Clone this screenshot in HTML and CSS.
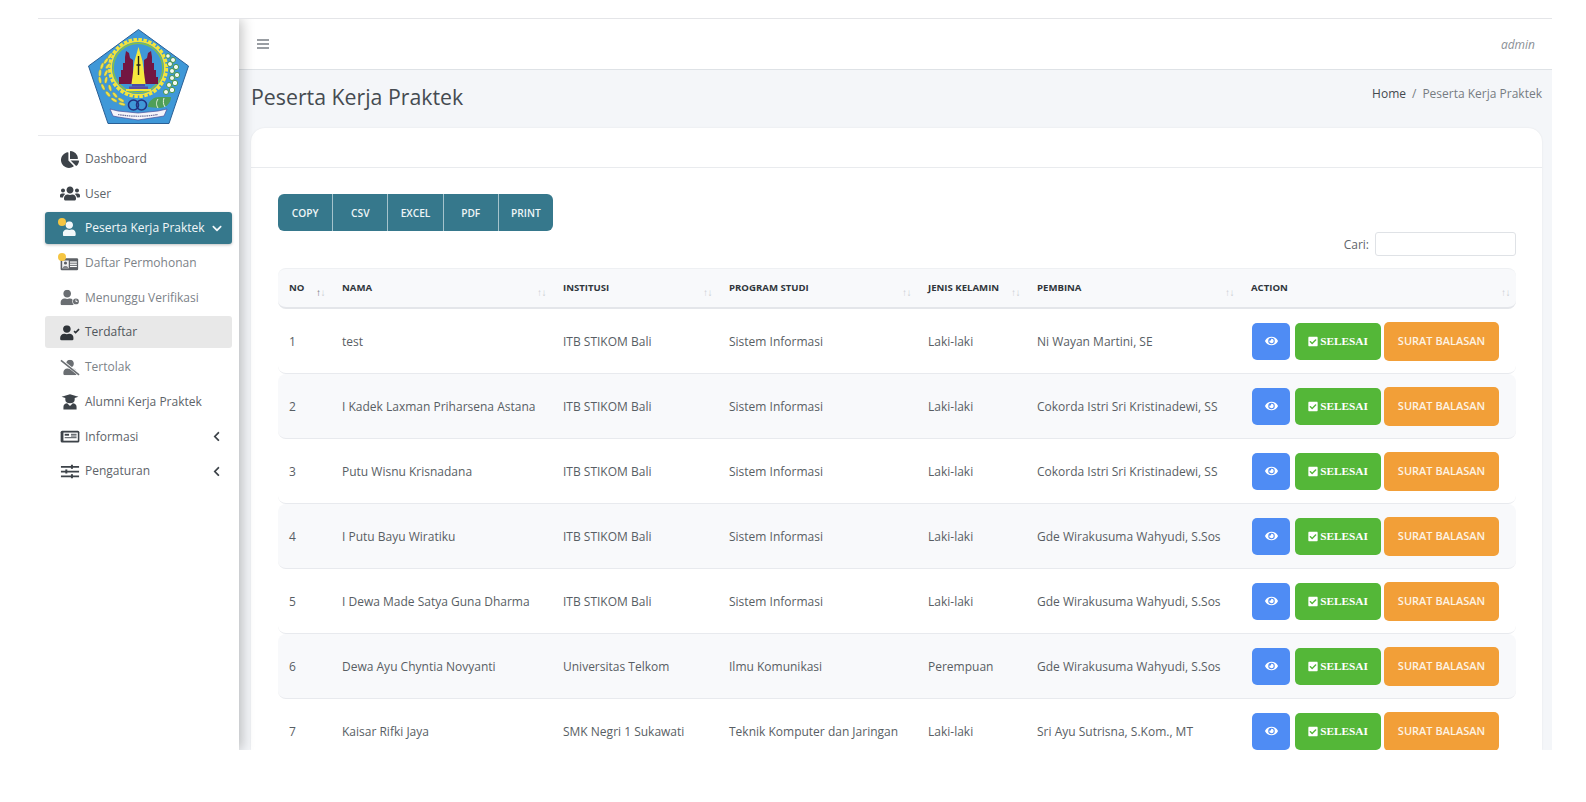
FILE: index.html
```html
<!DOCTYPE html>
<html lang="id">
<head>
<meta charset="utf-8">
<title>Peserta Kerja Praktek</title>
<link rel="stylesheet" href="styles.css">
</head>
<body>
<svg class="defs" width="0" height="0" aria-hidden="true">
  <symbol id="i-user" viewBox="0 0 448 512"><path d="M224 256c70.7 0 128-57.3 128-128S294.7 0 224 0 96 57.3 96 128s57.3 128 128 128zm89.6 32h-16.7c-22.2 10.2-46.9 16-72.9 16s-50.6-5.8-72.9-16h-16.7C60.2 288 0 348.2 0 422.4V464c0 26.5 21.5 48 48 48h352c26.5 0 48-21.5 48-48v-41.6c0-74.2-60.2-134.4-134.4-134.4z"/></symbol>
  <symbol id="i-eye" viewBox="0 0 576 512"><path d="M572.52 241.4C518.29 135.59 410.93 64 288 64S57.68 135.64 3.48 241.41a32.35 32.35 0 0 0 0 29.19C57.71 376.41 165.07 448 288 448s230.32-71.64 284.52-177.41a32.35 32.35 0 0 0 0-29.19zM288 400a144 144 0 1 1 144-144 143.93 143.93 0 0 1-144 144zm0-240a95.31 95.31 0 0 0-25.31 3.79 47.85 47.85 0 0 1-66.9 66.9A95.78 95.78 0 1 0 288 160z"/></symbol>
  <symbol id="i-check" viewBox="0 0 448 512"><path d="M400 480H48c-26.51 0-48-21.49-48-48V80c0-26.51 21.49-48 48-48h352c26.51 0 48 21.49 48 48v352c0 26.51-21.49 48-48 48zm-204.686-98.059l184-184c6.248-6.248 6.248-16.379 0-22.627l-22.627-22.627c-6.248-6.248-16.379-6.249-22.628 0L184 302.745l-69.059-69.059c-6.248-6.248-16.379-6.248-22.628 0L69.686 256.313c-6.248 6.248-6.248 16.379 0 22.627l104 104c6.249 6.25 16.379 6.25 22.628.001z"/></symbol>
  <symbol id="i-left" viewBox="0 0 320 512"><path d="M34.52 239.03L228.87 44.69c9.37-9.37 24.57-9.37 33.94 0l22.67 22.67c9.36 9.36 9.37 24.52.04 33.9L131.49 256l154.02 154.75c9.34 9.38 9.32 24.54-.04 33.9l-22.67 22.67c-9.37 9.37-24.57 9.37-33.94 0L34.52 272.97c-9.37-9.37-9.37-24.57 0-33.94z"/></symbol>
  <symbol id="i-down" viewBox="0 0 448 512"><path d="M207.029 381.476L12.686 187.132c-9.373-9.373-9.373-24.569 0-33.941l22.667-22.667c9.357-9.357 24.522-9.375 33.901-.04L224 284.505l154.745-154.021c9.379-9.335 24.544-9.317 33.901.04l22.667 22.667c9.373 9.373 9.373 24.569 0 33.941L240.971 381.476c-9.373 9.372-24.569 9.372-33.942 0z"/></symbol>
</svg>
<div class="frame">
  <aside class="sidebar">
    <div class="brand">
      <svg class="logo" viewBox="0 0 101 95" role="img" aria-label="Logo">
        <polygon points="50.5,0.5 100.5,37 81,94.5 20,94.5 0.5,37" fill="#3f98d8" stroke="#2a5f95" stroke-width="1"/>
        <circle cx="50" cy="39" r="28.6" fill="none" stroke="#f4e53c" stroke-width="3" stroke-dasharray="3.5 1.5"/>
        <circle cx="50" cy="39" r="26.8" fill="#3f98d8" stroke="#f4e53c" stroke-width="1.6"/>
        <circle cx="50" cy="39" r="24.8" fill="#3f98d8" stroke="#86c046" stroke-width="1.4"/>
        <polygon points="38,22 41,24 42,29 45,31 45,55 31,55 31,48 33,48 33,41 35,41 35,34 37,34 37,28" fill="#731642"/>
        <polygon points="63,22 60,24 59,29 56,31 56,55 70,55 70,48 68,48 68,41 66,41 66,34 64,34 64,28" fill="#731642"/>
        <polygon points="50.5,18 54.5,32 57.5,55 43.5,55 46.5,32" fill="#f6ea3d"/>
        <path d="M50.5 27v19M48.5 36h4" stroke="#222" stroke-width="1.4" fill="none"/>
        <rect x="44" y="55" width="13" height="2.5" fill="#4a4fa8"/>
        <rect x="41" y="57.5" width="19" height="2.5" fill="#5a4ea0"/>
        <rect x="38" y="60" width="25" height="2" fill="#f4e53c"/>
        <g fill="#efe04a" stroke="#8a8f30" stroke-width=".3">
          <ellipse cx="22" cy="27" rx="1.4" ry="3.4" transform="rotate(35 22 27)"/>
          <ellipse cx="18" cy="32" rx="1.4" ry="3.4" transform="rotate(35 18 32)"/>
          <ellipse cx="14" cy="37" rx="1.4" ry="3.4" transform="rotate(20 14 37)"/>
          <ellipse cx="20" cy="37" rx="1.4" ry="3.4" transform="rotate(40 20 37)"/>
          <ellipse cx="12" cy="44" rx="1.4" ry="3.4" transform="rotate(5 12 44)"/>
          <ellipse cx="18" cy="44" rx="1.4" ry="3.4" transform="rotate(25 18 44)"/>
          <ellipse cx="12" cy="51" rx="1.4" ry="3.4" transform="rotate(-10 12 51)"/>
          <ellipse cx="18" cy="51" rx="1.4" ry="3.4" transform="rotate(10 18 51)"/>
          <ellipse cx="15" cy="58" rx="1.4" ry="3.4" transform="rotate(-25 15 58)"/>
          <ellipse cx="22" cy="59" rx="1.4" ry="3.4" transform="rotate(-15 22 59)"/>
          <ellipse cx="20" cy="65" rx="1.4" ry="3.4" transform="rotate(-40 20 65)"/>
          <ellipse cx="27" cy="66" rx="1.4" ry="3.4" transform="rotate(-40 27 66)"/>
          <ellipse cx="26" cy="71" rx="1.4" ry="3.4" transform="rotate(-60 26 71)"/>
          <ellipse cx="33" cy="71" rx="1.4" ry="3.4" transform="rotate(-60 33 71)"/>
          <ellipse cx="34" cy="75" rx="1.4" ry="3.4" transform="rotate(-72 34 75)"/>
        </g>
        <g fill="#f4f8f0" stroke="#3c8f3c" stroke-width=".9">
          <circle cx="80" cy="27" r="2.3"/>
          <circle cx="85" cy="31" r="2.5"/>
          <circle cx="82" cy="35" r="2.5"/>
          <circle cx="88" cy="38" r="2.6"/>
          <circle cx="84" cy="42" r="2.5"/>
          <circle cx="89" cy="46" r="2.6"/>
          <circle cx="84" cy="49" r="2.5"/>
          <circle cx="87" cy="54" r="2.7"/>
          <circle cx="81" cy="56" r="2.5"/>
          <circle cx="84" cy="61" r="2.7"/>
          <circle cx="78" cy="63" r="2.5"/>
        </g>
        <path d="M60 78c0-7 7-10 11-10l12 0c0 7-6 11-12 11z" fill="#4f9f58"/>
        <path d="M70 70c-2 3-2 6 0 9M76 69c-1 3-1 6 1 9" stroke="#e6f2e0" stroke-width="1" fill="none"/>
        <circle cx="45.5" cy="76" r="5" fill="none" stroke="#23307f" stroke-width="1.6"/>
        <circle cx="53.5" cy="76" r="5" fill="none" stroke="#23307f" stroke-width="1.6"/>
        <polygon points="22,80 30,82 50,84 70,82 79,80 76,87 70,88 50,91 30,88 25,87" fill="#f5f5fa" stroke="#4a4f9c" stroke-width=".7"/>
        <path d="M30 85.5Q50 89 70 85.5" stroke="#6a6d9a" stroke-width="1.2" stroke-dasharray="1.5 .7" fill="none"/>
      </svg>
    </div>
    <nav class="menu">
      <a class="item item-dark">
        <svg class="ico" viewBox="0 0 544 512"><path d="M527.79 288H290.5l158.03 158.03c6.04 6.04 15.98 6.53 22.19.68 38.7-36.46 65.32-85.61 73.13-140.86 1.34-9.46-6.51-17.85-16.06-17.85zm-15.83-64.8C503.72 103.74 408.26 8.28 288.8.04 279.68-.59 272 7.1 272 16.24V240h223.77c9.14 0 16.82-7.68 16.19-16.8zM224 288V50.71c0-9.55-8.39-17.4-17.84-16.06C86.99 51.49-4.1 155.6.14 280.37 4.5 408.51 114.83 513.59 243.03 511.98c50.4-.63 96.97-16.87 135.26-44.03 7.9-5.6 8.42-17.23 1.57-24.08L224 288z"/></svg>
        <span>Dashboard</span>
      </a>
      <a class="item item-dark">
        <svg class="ico" viewBox="0 0 640 512"><path d="M96 224c35.3 0 64-28.7 64-64s-28.7-64-64-64-64 28.7-64 64 28.7 64 64 64zm448 0c35.3 0 64-28.7 64-64s-28.7-64-64-64-64 28.7-64 64 28.7 64 64 64zm32 32h-64c-17.6 0-33.5 7.1-45.1 18.6 40.3 22.1 68.9 62 75.1 109.4h66c17.7 0 32-14.3 32-32v-32c0-35.3-28.7-64-64-64zm-256 0c61.9 0 112-50.1 112-112S381.9 32 320 32 208 82.1 208 144s50.1 112 112 112zm76.8 32h-8.3c-20.8 10-43.9 16-68.5 16s-47.6-6-68.5-16h-8.3C179.6 288 128 339.6 128 403.2V432c0 26.5 21.5 48 48 48h288c26.5 0 48-21.5 48-48v-28.8c0-63.6-51.6-115.2-115.2-115.2zm-223.7-13.4C161.5 263.1 145.6 256 128 256H64c-35.3 0-64 28.7-64 64v32c0 17.7 14.3 32 32 32h65.9c6.3-47.4 34.9-87.3 75.2-109.4z"/></svg>
        <span>User</span>
      </a>
      <a class="item item-active">
        <svg class="ico" viewBox="0 0 640 512"><use href="#i-user" x="90" y="20" width="416" height="480"/></svg>
        <i class="dot"></i>
        <span class="grow">Peserta Kerja Praktek</span>
        <svg class="chev" viewBox="0 0 448 512"><use href="#i-down"/></svg>
      </a>
      <a class="item item-muted">
        <svg class="ico" viewBox="0 0 640 512"><rect x="20" y="90" width="560" height="380" rx="40" fill="#5d6166"/><rect x="70" y="160" width="210" height="250" fill="#f2f2f2"/><circle cx="175" cy="240" r="50" fill="#5d6166"/><path d="M90 390c0-65 170-65 170 0z" fill="#5d6166"/><rect x="320" y="190" width="220" height="40" fill="#fff"/><rect x="320" y="260" width="220" height="40" fill="#fff"/><rect x="320" y="330" width="220" height="40" fill="#fff"/></svg>
        <i class="dot"></i>
        <span>Daftar Permohonan</span>
      </a>
      <a class="item item-muted">
        <svg class="ico" viewBox="0 0 640 512"><use href="#i-user" x="10" y="10" width="440" height="490"/><circle cx="510" cy="380" r="115" fill="#fff"/><circle cx="510" cy="380" r="95"/><path d="M510 320v65h50" stroke="#fff" stroke-width="28" fill="none"/></svg>
        <span>Menunggu Verifikasi</span>
      </a>
      <a class="item item-current">
        <svg class="ico" viewBox="0 0 640 512"><use href="#i-user" x="0" y="20" width="440" height="490"/><path d="M450 210l50 50 110-110" fill="none" stroke="currentColor" stroke-width="52"/></svg>
        <span>Terdaftar</span>
      </a>
      <a class="item item-muted">
        <svg class="ico" viewBox="0 0 640 512"><use href="#i-user" x="100" y="10" width="440" height="490"/><path d="M30 20l590 470" stroke="#fff" stroke-width="90"/><path d="M30 25l580 465" stroke="currentColor" stroke-width="50"/></svg>
        <span>Tertolak</span>
      </a>
      <a class="item item-dark">
        <svg class="ico" viewBox="0 0 640 512"><path d="M320 20L590 100 470 140v60a150 110 0 0 1-300 0v-60L50 100z"/><path d="M110 512V420c0-70 60-110 120-110l90 90 90-90c60 0 120 40 120 110v92z"/></svg>
        <span>Alumni Kerja Praktek</span>
      </a>
      <a class="item item-dark">
        <svg class="ico" viewBox="0 0 640 512"><rect x="20" y="70" width="600" height="380" rx="50"/><rect x="110" y="130" width="460" height="260" fill="#fff"/><rect x="150" y="170" width="140" height="60"/><rect x="350" y="170" width="180" height="30"/><rect x="350" y="225" width="180" height="30"/><rect x="150" y="280" width="380" height="30"/></svg>
        <span class="grow">Informasi</span>
        <svg class="chev chev-left" viewBox="0 0 320 512"><use href="#i-left"/></svg>
      </a>
      <a class="item item-dark">
        <svg class="ico" viewBox="0 0 640 512"><rect x="30" y="80" width="580" height="56"/><rect x="350" y="40" width="64" height="130"/><rect x="30" y="232" width="580" height="56"/><rect x="170" y="190" width="64" height="130"/><rect x="30" y="384" width="580" height="56"/><rect x="350" y="342" width="64" height="130"/></svg>
        <span class="grow">Pengaturan</span>
        <svg class="chev chev-left" viewBox="0 0 320 512"><use href="#i-left"/></svg>
      </a>
    </nav>
  </aside>
  <main class="main">
    <header class="topbar">
      <svg class="burger" viewBox="0 0 12 10"><path d="M0 1h12M0 5h12M0 9h12" stroke="currentColor" stroke-width="1.3"/></svg>
      <em class="who">admin</em>
    </header>
    <div class="pagehead">
      <h1>Peserta Kerja Praktek</h1>
      <div class="crumb"><span class="crumb-home">Home</span><span class="crumb-sep">/</span><span>Peserta Kerja Praktek</span></div>
    </div>
    <section class="card">
      <div class="card-head"></div>
      <div class="card-body">
        <div class="exports">
          <button class="exp">COPY</button><button class="exp">CSV</button><button class="exp">EXCEL</button><button class="exp">PDF</button><button class="exp">PRINT</button>
        </div>
        <div class="search"><label for="q">Cari:</label><input id="q" type="text"></div>
        <table class="grid">
          <colgroup><col class="c1"><col class="c2"><col class="c3"><col class="c4"><col class="c5"><col class="c6"><col class="c7"></colgroup>
          <thead>
            <tr>
              <th>NO<span class="sort sort-on"><b>↑</b>↓</span></th>
              <th>NAMA<span class="sort">↑↓</span></th>
              <th>INSTITUSI<span class="sort">↑↓</span></th>
              <th>PROGRAM STUDI<span class="sort">↑↓</span></th>
              <th>JENIS KELAMIN<span class="sort">↑↓</span></th>
              <th>PEMBINA<span class="sort">↑↓</span></th>
              <th>ACTION<span class="sort">↑↓</span></th>
            </tr>
          </thead>
          <tbody>
            <tr><td>1</td><td>test</td><td>ITB STIKOM Bali</td><td>Sistem Informasi</td><td>Laki-laki</td><td>Ni Wayan Martini, SE</td><td><div class="acts"><a class="btn b-eye"><svg viewBox="0 0 576 512"><use href="#i-eye"/></svg></a><a class="btn b-ok"><svg viewBox="0 0 448 512"><use href="#i-check"/></svg>SELESAI</a><a class="btn b-letter">SURAT BALASAN</a></div></td></tr>
            <tr><td>2</td><td>I Kadek Laxman Priharsena Astana</td><td>ITB STIKOM Bali</td><td>Sistem Informasi</td><td>Laki-laki</td><td>Cokorda Istri Sri Kristinadewi, SS</td><td><div class="acts"><a class="btn b-eye"><svg viewBox="0 0 576 512"><use href="#i-eye"/></svg></a><a class="btn b-ok"><svg viewBox="0 0 448 512"><use href="#i-check"/></svg>SELESAI</a><a class="btn b-letter">SURAT BALASAN</a></div></td></tr>
            <tr><td>3</td><td>Putu Wisnu Krisnadana</td><td>ITB STIKOM Bali</td><td>Sistem Informasi</td><td>Laki-laki</td><td>Cokorda Istri Sri Kristinadewi, SS</td><td><div class="acts"><a class="btn b-eye"><svg viewBox="0 0 576 512"><use href="#i-eye"/></svg></a><a class="btn b-ok"><svg viewBox="0 0 448 512"><use href="#i-check"/></svg>SELESAI</a><a class="btn b-letter">SURAT BALASAN</a></div></td></tr>
            <tr><td>4</td><td>I Putu Bayu Wiratiku</td><td>ITB STIKOM Bali</td><td>Sistem Informasi</td><td>Laki-laki</td><td>Gde Wirakusuma Wahyudi, S.Sos</td><td><div class="acts"><a class="btn b-eye"><svg viewBox="0 0 576 512"><use href="#i-eye"/></svg></a><a class="btn b-ok"><svg viewBox="0 0 448 512"><use href="#i-check"/></svg>SELESAI</a><a class="btn b-letter">SURAT BALASAN</a></div></td></tr>
            <tr><td>5</td><td>I Dewa Made Satya Guna Dharma</td><td>ITB STIKOM Bali</td><td>Sistem Informasi</td><td>Laki-laki</td><td>Gde Wirakusuma Wahyudi, S.Sos</td><td><div class="acts"><a class="btn b-eye"><svg viewBox="0 0 576 512"><use href="#i-eye"/></svg></a><a class="btn b-ok"><svg viewBox="0 0 448 512"><use href="#i-check"/></svg>SELESAI</a><a class="btn b-letter">SURAT BALASAN</a></div></td></tr>
            <tr><td>6</td><td>Dewa Ayu Chyntia Novyanti</td><td>Universitas Telkom</td><td>Ilmu Komunikasi</td><td>Perempuan</td><td>Gde Wirakusuma Wahyudi, S.Sos</td><td><div class="acts"><a class="btn b-eye"><svg viewBox="0 0 576 512"><use href="#i-eye"/></svg></a><a class="btn b-ok"><svg viewBox="0 0 448 512"><use href="#i-check"/></svg>SELESAI</a><a class="btn b-letter">SURAT BALASAN</a></div></td></tr>
            <tr><td>7</td><td>Kaisar Rifki Jaya</td><td>SMK Negri 1 Sukawati</td><td>Teknik Komputer dan Jaringan</td><td>Laki-laki</td><td>Sri Ayu Sutrisna, S.Kom., MT</td><td><div class="acts"><a class="btn b-eye"><svg viewBox="0 0 576 512"><use href="#i-eye"/></svg></a><a class="btn b-ok"><svg viewBox="0 0 448 512"><use href="#i-check"/></svg>SELESAI</a><a class="btn b-letter">SURAT BALASAN</a></div></td></tr>
          </tbody>
        </table>
      </div>
    </section>
  </main>
</div>
</body>
</html>
```

FILE: styles.css
```css
* { box-sizing: border-box; }
html, body { margin: 0; padding: 0; background: #fff; }
body { font-family: "Open Sans", "Noto Sans", sans-serif; font-size: 12px; color: #555b61; }
.defs { display: block; height: 0; }

.frame {
  display: flex;
  width: 1514px;
  height: 732px;
  margin: 18px 0 0 38px;
  border-top: 1px solid #e4e5e8;
  overflow: hidden;
}

.sidebar {
  flex: 0 0 201px;
  background: #fff;
  box-shadow: 3px 0 12px rgba(0, 0, 0, .24);
  position: relative;
  z-index: 2;
}
.brand {
  height: 117px;
  border-bottom: 1px solid #e8e9ec;
  display: flex;
  justify-content: center;
  padding: 10px 0 0 0;
}
.logo { width: 101px; height: 95px; display: block; }
.menu { display: flex; flex-direction: column; gap: 2.7px; padding: 7px 7px 0; }
.item {
  display: flex;
  align-items: center;
  height: 32px;
  padding: 0 10px 0 15px;
  border-radius: 3px;
  position: relative;
  font-size: 12px;
  line-height: 32px;
}
.grow { flex: 1; }
.ico { width: 20px; height: 17px; margin-right: 5px; fill: currentColor; flex: none; }
.item-dark { color: #5d6369; }
.item-dark .ico { color: #3d4349; }
.item-muted { color: #7c8288; }
.item-muted .ico { color: #6a6e72; }
.item-active { background: #36788c; color: #f2f7f9; box-shadow: 0 1px 3px rgba(0, 0, 0, .25); }
.item-current { background: #e8e8e8; color: #50565c; }
.item-current .ico { color: #2f3439; }
.dot {
  position: absolute;
  left: 13px;
  top: 6px;
  width: 8px;
  height: 8px;
  border-radius: 50%;
  background: #f5c542;
}
.chev { width: 10px; height: 11px; fill: currentColor; flex: none; }
.chev-left { width: 7px; color: #3d4349; margin-right: 2px; }

.main { flex: 1; min-width: 0; background: #f4f6f9; display: flex; flex-direction: column; }
.topbar {
  flex: 0 0 51px;
  background: #fff;
  border-bottom: 1px solid #dee2e6;
  display: flex;
  align-items: center;
  justify-content: space-between;
  padding: 0 17px 0 18px;
}
.burger { width: 12px; height: 10px; color: #7a7f85; display: block; }
.who { font-size: 12px; color: #8b9096; }

.pagehead {
  flex: 0 0 58px;
  display: flex;
  justify-content: space-between;
  padding: 0 10px 0 12px;
}
.pagehead h1 {
  margin: 0;
  font-size: 21.3px;
  font-weight: 400;
  line-height: 30px;
  padding-top: 12px;
  color: #454b51;
}
.crumb { font-size: 12px; line-height: 18px; padding-top: 15px; color: #767c82; display: flex; }
.crumb-home { color: #43494f; }
.crumb-sep { margin: 0 6px; }

.card {
  flex: 1;
  margin: 0 10px 0 12px;
  background: #fff;
  border-radius: 14px 14px 0 0;
  box-shadow: 0 0 2px rgba(0, 0, 0, .08);
  min-height: 0;
}
.card-head { height: 40px; border-bottom: 1px solid #e9ebee; }
.card-body { padding: 26px 26px 0 27px; }

.exports { display: flex; width: 275px; height: 37px; border-radius: 6px; overflow: hidden; }
.exp {
  flex: 1;
  border: 0;
  border-right: 1px solid #a5c3cc;
  background: #36788c;
  color: #eef5f7;
  font: 600 10.2px "Open Sans", sans-serif;
  padding: 0;
}
.exp:last-child { border-right: 0; }

.search { display: flex; justify-content: flex-end; align-items: center; gap: 6px; height: 24px; margin-top: 1px; font-size: 12px; color: #5f656b; }
.search input { width: 141px; height: 24px; border: 1px solid #dfe2e6; border-radius: 3px; background: #fff; padding: 0; }

.grid { margin-top: 12px; width: 1238px; table-layout: fixed; border-collapse: separate; border-spacing: 0; }
.c1 { width: 53px; } .c2 { width: 221px; } .c3 { width: 166px; } .c4 { width: 199px; }
.c5 { width: 109px; } .c6 { width: 214px; } .c7 { width: 276px; }
th {
  position: relative;
  height: 41px;
  padding: 0 11px 2px;
  text-align: left;
  font-size: 9.6px;
  font-weight: 700;
  color: #30363c;
  background: #f8f9fb;
  border-top: 1px solid #eef0f3;
  border-bottom: 2px solid #e4e6ea;
  white-space: nowrap;
}
th:first-child { border-radius: 8px 0 0 8px; }
th:last-child { border-radius: 0 8px 8px 0; }
.sort { position: absolute; right: 6px; top: 17px; font-size: 10px; font-weight: 400; color: #c9cdd2; line-height: 12px; letter-spacing: -.5px; }
.sort b { font-weight: 400; color: #666c72; }
td {
  height: 65px;
  padding: 0 11px;
  font-size: 12px;
  color: #585e64;
  white-space: nowrap;
  border-bottom: 1px solid #e8eaee;
}
td:first-child { border-radius: 8px 0 0 8px; }
td:last-child { border-radius: 0 8px 8px 0; }
tbody tr:nth-child(even) td { background: #f8f9fb; }

.acts { display: flex; align-items: center; padding-left: 1px; }
.btn {
  display: flex;
  align-items: center;
  justify-content: center;
  height: 37px;
  border-radius: 5px;
  color: #fff;
}
.b-eye { width: 38px; background: #4f8cf4; }
.b-eye svg { width: 13px; height: 12px; fill: #fff; }
.b-ok {
  width: 86px;
  margin-left: 5px;
  background: #54b738;
  font: 700 11.3px "Liberation Serif", serif;
}
.b-ok svg { width: 10px; height: 11px; fill: #fff; margin-right: 2px; }
.b-letter {
  width: 115px;
  height: 39px;
  margin-left: 3px;
  padding-bottom: 1px;
  background: #f29f38;
  font: 600 11px "Open Sans", sans-serif;
  color: #fdf3e4;
}
```
